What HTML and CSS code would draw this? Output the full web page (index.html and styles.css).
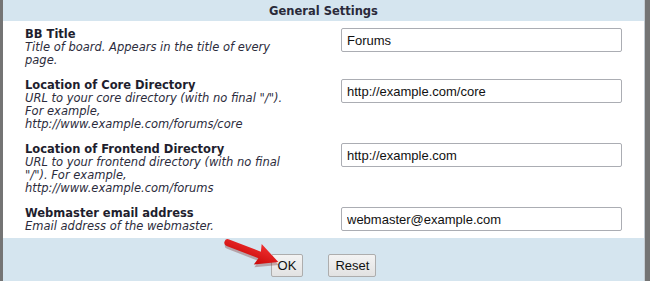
FILE: index.html
```html
<!DOCTYPE html>
<html lang="en">
<head>
  <meta charset="UTF-8">
  <title>General Settings</title>
  <link rel="stylesheet" href="styles.css">
</head>
<body>
  <div class="panel">
    <div class="panel-head">General Settings</div>

    <div class="settings">
      <div class="row">
        <div class="info">
          <div class="name">BB Title</div>
          <div class="desc">Title of board. Appears in the title of every page.</div>
        </div>
        <input class="field" type="text" value="Forums">
      </div>

      <div class="row">
        <div class="info">
          <div class="name">Location of Core Directory</div>
          <div class="desc">URL to your core directory (with no final "/"). For example, http://www.example.com/forums/core</div>
        </div>
        <input class="field" type="text" value="http://example.com/core">
      </div>

      <div class="row">
        <div class="info">
          <div class="name">Location of Frontend Directory</div>
          <div class="desc">URL to your frontend directory (with no final "/"). For example, http://www.example.com/forums</div>
        </div>
        <input class="field" type="text" value="http://example.com">
      </div>

      <div class="row">
        <div class="info">
          <div class="name">Webmaster email address</div>
          <div class="desc">Email address of the webmaster.</div>
        </div>
        <input class="field" type="text" value="webmaster@example.com">
      </div>
    </div>

    <div class="panel-foot">
      <button class="btn">OK</button>
      <button class="btn">Reset</button>
      <!-- red arrow pointing at the OK button -->
      <svg class="arrow" width="70" height="40" viewBox="0 0 70 40">
        <defs>
          <linearGradient id="red" x1="0" y1="0" x2="0" y2="1">
            <stop offset="0" stop-color="#f03030"/>
            <stop offset="1" stop-color="#c80808"/>
          </linearGradient>
        </defs>
        <g transform="translate(6 6) rotate(21)">
          <path d="M2 -3.5 L36 -3.5 L34 -11 L56 0 L34 11 L36 3.5 L2 3.5 A3.5 3.5 0 0 1 2 -3.5 Z" fill="#7a2a2a" opacity="0.35" transform="translate(1.5 2.5)"/>
          <path d="M2 -3.5 L36 -3.5 L34 -11 L56 0 L34 11 L36 3.5 L2 3.5 A3.5 3.5 0 0 1 2 -3.5 Z" fill="url(#red)"/>
        </g>
      </svg>
    </div>
  </div>
</body>
</html>
```

FILE: styles.css
```css
body {
  margin: 0;
  background-color: #747474;
  font-family: "DejaVu Sans", Verdana, sans-serif;
  font-size: 11.5px;
  color: #1e1e2e;
}
.panel {
  margin-left: 3px;
  width: 641px;
  height: 281px;
  border-right: 1px solid #c4ccd3;
  background-color: #fff;
  display: flex;
  flex-direction: column;
}
.panel-head {
  height: 21px;
  line-height: 22px;
  background-color: #d5e5ef;
  text-align: center;
  font-weight: bold;
  color: #2a2a3a;
}
.settings {
  padding: 7px 0 5px 22px;
  display: flex;
  flex-direction: column;
  gap: 12px;
}
.row {
  display: grid;
  grid-template-columns: 264px 281px;
  column-gap: 52px;
  align-items: start;
}
.name {
  font-weight: bold;
  line-height: 13px;
}
.desc {
  font-style: italic;
  line-height: 13px;
  color: #2c2c3c;
}
.field {
  box-sizing: border-box;
  height: 24px;
  width: 281px;
  margin: 0;
  padding: 0 5px;
  border: 1px solid #abadb3;
  border-radius: 2px;
  font-family: "Liberation Sans", Arial, sans-serif;
  font-size: 13px;
  color: #111;
  background-color: #fff;
}
.panel-foot {
  flex: 1;
  position: relative;
  background-color: #d5e5ef;
  display: flex;
  justify-content: center;
  align-items: flex-start;
  gap: 25px;
  padding-top: 16px;
}
.btn {
  box-sizing: border-box;
  height: 23px;
  padding: 0 6px;
  border: 1px solid #adadad;
  border-radius: 2px;
  background: linear-gradient(#f3f3f3, #e2e2e2);
  font-family: "Liberation Sans", Arial, sans-serif;
  font-size: 13px;
  color: #111;
}
.arrow {
  position: absolute;
  left: 217px;
  top: -2px;
}
```
